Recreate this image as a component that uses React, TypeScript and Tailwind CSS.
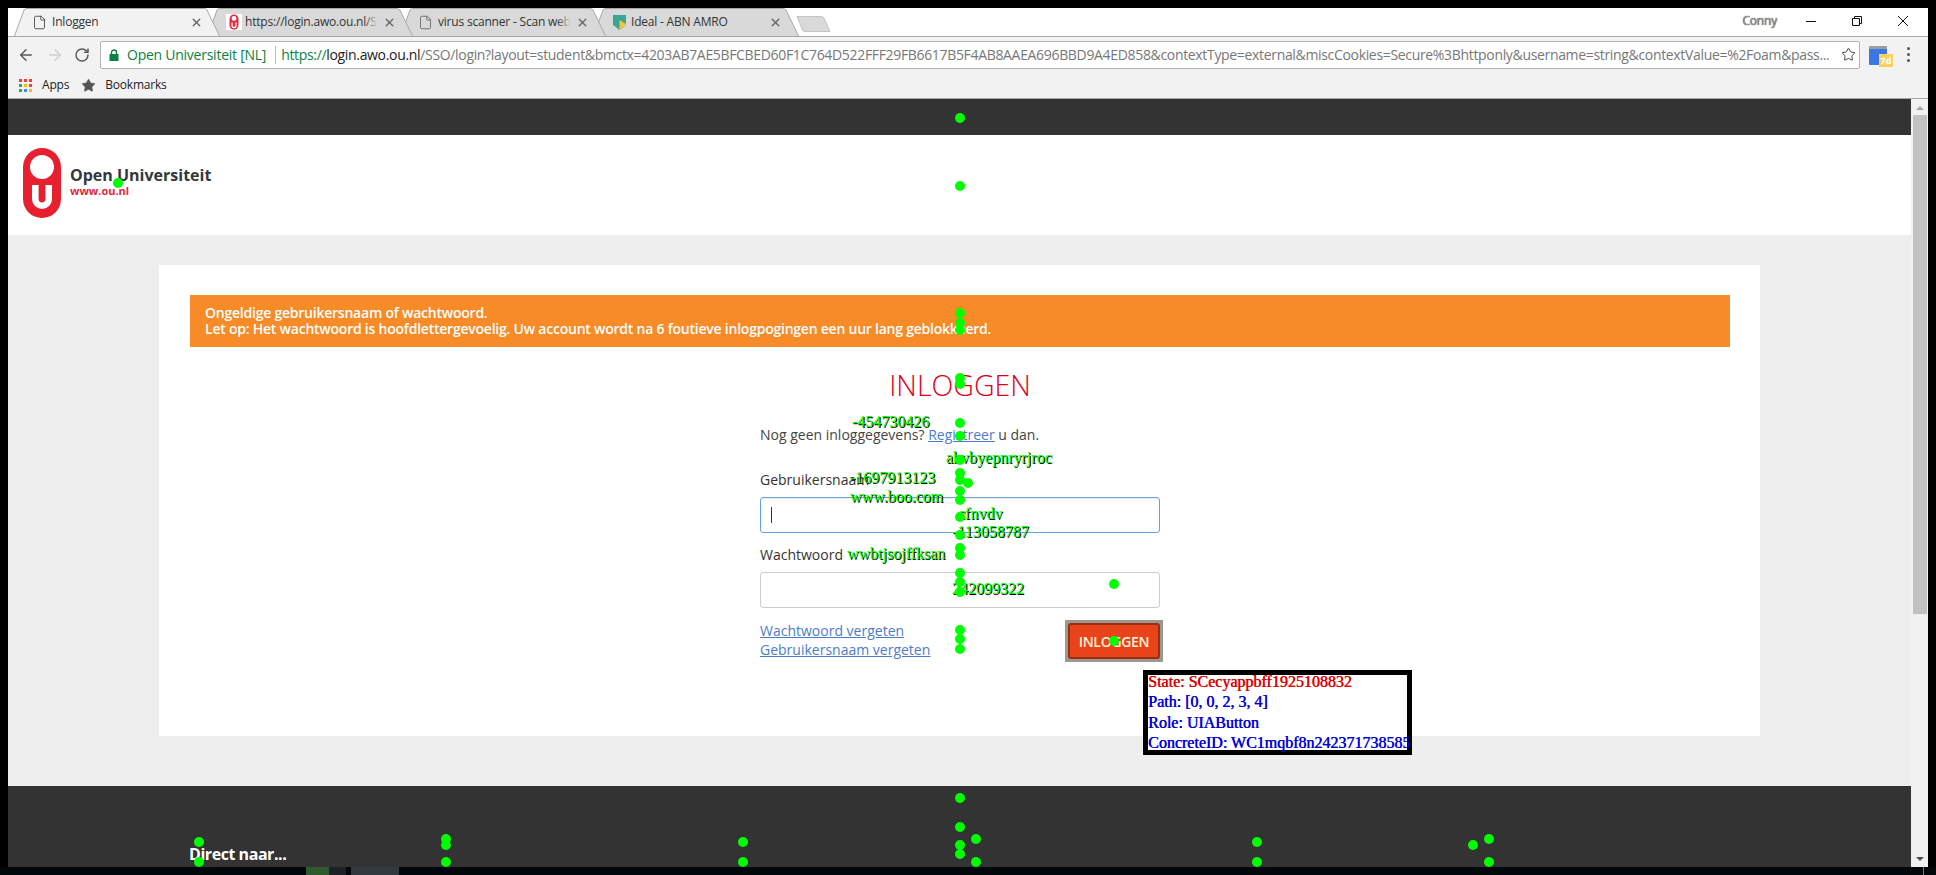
import { ArrowLeft, ArrowRight, File, RotateCw, Star, X } from 'lucide-react';

const URL_TEXT =
  '/SSO/login?layout=student&bmctx=4203AB7AE5BFCBED60F1C764D522FFF29FB6617B5F4AB8AAEA696BBD9A4ED858&contextType=external&miscCookies=Secure%3Bhttponly&username=string&contextValue=%2Foam&pass...';

const debugLabels = [
  { text: '-454730426', x: 852, y: 413 },
  { text: 'ahvbyepnryrjroc', x: 946, y: 449 },
  { text: '-1697913123', x: 850, y: 469 },
  { text: 'www.boo.com', x: 850, y: 488 },
  { text: 'cfnvdv', x: 958, y: 505 },
  { text: '-113058787', x: 952, y: 523 },
  { text: 'wwbtjsojffksan', x: 847, y: 545 },
  { text: '242099322', x: 952, y: 580 },
];

const dots = [
  [960, 118], [960, 186], [118, 183], [960, 313], [960, 323], [960, 330], [960, 378], [960, 384],
  [960, 423], [960, 436], [960, 460], [960, 473], [960, 480], [968, 483], [960, 491], [960, 500],
  [960, 517], [960, 535], [960, 548], [960, 555], [960, 573], [960, 582], [960, 592], [1114, 584],
  [960, 630], [960, 639], [960, 649], [1114, 641], [960, 798], [960, 827], [199, 842], [446, 839],
  [446, 845], [743, 842], [960, 845], [976, 839], [960, 854], [199, 862], [446, 862], [743, 862],
  [976, 862], [1257, 842], [1257, 862], [1473, 845], [1489, 839], [1489, 862],
];

const OuFavicon = () => (
  <svg width="16" height="16" viewBox="0 0 16 16" className="shrink-0">
    <rect width="16" height="16" fill="#fff" />
    <rect x="3.5" y="0.5" width="9" height="15" rx="4.5" fill="#e8283c" />
    <circle cx="8" cy="4.5" r="2.4" fill="#fff" />
    <path d="M6 8.5v3a2 2 0 0 0 4 0v-3" fill="none" stroke="#fff" strokeWidth="1.3" />
  </svg>
);

const AbnFavicon = () => (
  <svg width="16" height="17" viewBox="0 0 16 17" className="shrink-0">
    <path d="M1 1h13v10l-6.5 5L1 11z" fill="#3aa597" />
    <path d="M7.5 6l6.5 4v1l-6.5 5z" fill="#f7c538" />
  </svg>
);

const Tab = ({
  active,
  title,
  icon,
  z,
}: {
  active?: boolean;
  title: string;
  icon: React.ReactNode;
  z: string;
}) => (
  <div className={`relative w-[206px] h-full -mr-[13px] shrink-0 ${z}`}>
    <svg width="206" height="28" viewBox="0 0 206 28" className="absolute inset-0">
      <path
        d="M0.5 28 L10 2 Q11 0.5 13 0.5 H190 Q192 0.5 193 2 L205.5 28"
        fill={active ? '#f2f2f2' : '#d9d9d9'}
        stroke="#a8a8a8"
      />
    </svg>
    <div className="relative flex items-center h-full pl-[19px] pr-[17px]">
      <div className="w-[19px] shrink-0">{icon}</div>
      <div className="relative w-[133px] overflow-hidden whitespace-nowrap text-[12px] tracking-[-0.2px] text-[#333] font-['Open_Sans',sans-serif]">
        {title}
        <div className={`absolute right-0 top-0 bottom-0 w-[14px] bg-gradient-to-r from-transparent ${active ? 'to-[#f2f2f2]' : 'to-[#d9d9d9]'}`} />
      </div>
      <X size={13} strokeWidth={2.6} className="ml-auto text-[#666]" />
    </div>
  </div>
);

const Chrome = () => (
  <div className="shrink-0 font-['Open_Sans',sans-serif]">
    <div className="relative flex h-[28px] bg-white pl-[6px]">
      <Tab active title="Inloggen" z="z-40" icon={<File size={15} strokeWidth={1.4} className="text-[#444] -ml-[1px]" />} />
      <Tab title="https://login.awo.ou.nl/SSO/login" z="z-30" icon={<OuFavicon />} />
      <Tab title="virus scanner - Scan website" z="z-20" icon={<File size={15} strokeWidth={1.4} className="text-[#666] -ml-[1px]" />} />
      <Tab title="Ideal - ABN AMRO" z="z-10" icon={<AbnFavicon />} />
      <svg width="36" height="18" viewBox="0 0 36 18" className="ml-[10px] mt-[7px] shrink-0">
        <path d="M1 1.5 H25 Q27 1.5 28 3 L34 16.5 H9 Q7 16.5 6.5 15 Z" fill="#d9d9d9" stroke="#c4c4c4" />
      </svg>
      <div className="ml-auto flex items-center h-[26px]">
        <span className="text-[12px] tracking-[-0.2px] text-[#999] mr-[28px] [text-shadow:0_0_1px_#000]">Conny</span>
        <svg width="12" height="12" viewBox="0 0 12 12" className="mr-[34px]">
          <path d="M1 6.5h10" stroke="#111" strokeWidth="1" />
        </svg>
        <svg width="12" height="12" viewBox="0 0 12 12" className="mr-[34px]">
          <path d="M1.5 3.5h7v7h-7zM3.5 3.5v-2h7v7h-2" fill="none" stroke="#111" strokeWidth="1" />
        </svg>
        <svg width="12" height="12" viewBox="0 0 12 12" className="mr-[19px]">
          <path d="M1 1l10 10M11 1L1 11" stroke="#111" strokeWidth="1" />
        </svg>
      </div>
    </div>

    <div className="flex items-center h-[36px] bg-[#f2f2f2] border-t border-[#a8a8a8]">
      <ArrowLeft size={18} strokeWidth={2} className="ml-[9px] text-[#5a5a5a]" />
      <ArrowRight size={18} strokeWidth={2} className="ml-[11px] text-[#cfcfcf]" />
      <RotateCw size={16} strokeWidth={2.2} className="ml-[10px] text-[#5a5a5a]" />
      <div className="flex items-center w-[1760px] h-[28px] ml-[10px] bg-white border border-[#b3b3b3] rounded-[2px] text-[14px] whitespace-nowrap overflow-hidden">
        <svg width="10" height="12" viewBox="0 0 10 12" className="ml-[8px] shrink-0">
          <path d="M2.5 5V3.5a2.5 2.5 0 0 1 5 0V5" fill="none" stroke="#0b8043" strokeWidth="1.4" />
          <rect x="0.5" y="5" width="9" height="7" fill="#0b8043" />
        </svg>
        <span className="ml-[8px] text-[#0b8043] tracking-[-0.25px]">Open Universiteit [NL]</span>
        <div className="w-px h-[18px] bg-[#bdbdbd] ml-[9px]" />
        <div className="w-[1551px] ml-[5px] overflow-hidden tracking-[-0.33px]">
          <span className="text-[#0b8043]">https://</span>
          <span className="text-[#222]">login.awo.ou.nl</span>
          <span className="text-[#777]">{URL_TEXT}</span>
        </div>
        <Star size={15} strokeWidth={1.6} className="ml-[9px] shrink-0 text-[#444]" />
      </div>
      <div className="relative w-[18px] h-[19px] ml-[9px] mt-[2px] bg-[#3b78e7] rounded-[1px]">
        <div className="absolute left-0 right-0 top-0 h-[3px] bg-[#9e9e9e]" />
        <div className="absolute -right-[6px] -bottom-[2px] w-[14px] h-[13px] bg-[#fbd25c] text-[9px] leading-[13px] text-center text-white font-bold">7d</div>
      </div>
      <div className="ml-[20px] flex flex-col gap-[3px]">
        <div className="w-[3px] h-[3px] rounded-full bg-[#555]" />
        <div className="w-[3px] h-[3px] rounded-full bg-[#555]" />
        <div className="w-[3px] h-[3px] rounded-full bg-[#555]" />
      </div>
    </div>

    <div className="flex items-center h-[27px] bg-[#f2f2f2] border-b border-[#a8a8a8] text-[12px] text-[#222]">
      <svg width="13" height="13" viewBox="0 0 13 13" className="ml-[11px]">
        <rect x="0" y="0" width="3" height="3" fill="#ea4335" />
        <rect x="5" y="0" width="3" height="3" fill="#ea4335" />
        <rect x="10" y="0" width="3" height="3" fill="#ea4335" />
        <rect x="0" y="5" width="3" height="3" fill="#34a853" />
        <rect x="5" y="5" width="3" height="3" fill="#fbbc05" />
        <rect x="10" y="5" width="3" height="3" fill="#ea4335" />
        <rect x="0" y="10" width="3" height="3" fill="#34a853" />
        <rect x="5" y="10" width="3" height="3" fill="#4285f4" />
        <rect x="10" y="10" width="3" height="3" fill="#fbbc05" />
      </svg>
      <span className="ml-[10px] tracking-[-0.2px]">Apps</span>
      <Star size={15} fill="#555" strokeWidth={1} className="ml-[12px] text-[#555]" />
      <span className="ml-[9px] tracking-[-0.2px]">Bookmarks</span>
    </div>
  </div>
);

const Logo = () => (
  <div className="-mt-[4px] flex items-center font-['Open_Sans',sans-serif]">
    <svg width="38" height="70" viewBox="0 0 38 70" className="shrink-0">
      <rect width="38" height="70" rx="19" fill="#e6202f" />
      <circle cx="19" cy="19" r="12" fill="#fff" />
      <path d="M19 37h-10v14a10 10 0 0 0 20 0v-14h-6.6v14a3.4 3.4 0 0 1-6.8 0v-14z" fill="#fff" />
    </svg>
    <div className="ml-[9px] -mt-[3px]">
      <div className="text-[16px] leading-[18px] font-bold text-[#33383c]">Open Universiteit</div>
      <div className="text-[11px] leading-[13px] font-bold text-[#e6263a]">www.ou.nl</div>
    </div>
  </div>
);

const LoginForm = () => (
  <div className="w-[400px] mx-auto text-[14px] text-[#444]">
    <h1 className="mt-[21px] text-center text-[28.5px] leading-[34px] font-light text-[#e0001a]">INLOGGEN</h1>
    <p className="mt-[23px] leading-[20px]">
      Nog geen inloggegevens? <a className="text-[#4d7cc7] underline">Registreer</a> u dan.
    </p>
    <label className="block mt-[25px] leading-[20px] text-[#333]">Gebruikersnaam</label>
    <div className="mt-[7px] flex items-center h-[36px] px-[10px] border border-[#6a9fd8] rounded-[3px] shadow-[inset_0_1px_1px_rgba(0,0,0,0.08)]">
      <div className="w-px h-[16px] bg-[#333]" />
    </div>
    <label className="block mt-[12px] leading-[20px] text-[#333]">Wachtwoord</label>
    <div className="mt-[7px] h-[36px] border border-[#ccc] rounded-[3px]" />
    <div className="mt-[12px] flex justify-between">
      <div className="pt-[1px] leading-[19px] text-[#4d7cc7] underline">
        <a className="block">Wachtwoord vergeten</a>
        <a className="block">Gebruikersnaam vergeten</a>
      </div>
      <div className="-mr-[3px] p-[3px] bg-[#999990]">
        <button className="w-[92px] h-[36px] bg-[#e8431a] border-2 border-[#98300f] rounded-[3px] text-[14px] tracking-[-0.3px] font-semibold text-[#fff3d6]">
          INLOGGEN
        </button>
      </div>
    </div>
  </div>
);

const Page = () => (
  <div className="flex-1 min-w-0 flex flex-col bg-[#eee] font-['Open_Sans',sans-serif]">
    <div className="h-[36px] bg-[#333]" />
    <div className="flex items-center h-[100px] pl-[15px] bg-white">
      <Logo />
    </div>
    <main className="px-[151px] pt-[30px] pb-[50px]">
      <div className="h-[471px] bg-white pl-[31px] pr-[30px] pt-[30px]">
        <div className="h-[52px] bg-[#f68b28] px-[15px] py-[10px] text-[14px] leading-[16px] tracking-[-0.23px] font-semibold text-white">
          <p>Ongeldige gebruikersnaam of wachtwoord.</p>
          <p>Let op: Het wachtwoord is hoofdlettergevoelig. Uw account wordt na 6 foutieve inlogpogingen een uur lang geblokkeerd.</p>
        </div>
        <LoginForm />
      </div>
    </main>
    <footer className="flex-1 bg-[#333] pl-[181px] pt-[57px]">
      <h2 className="text-[16px] leading-[22px] tracking-[-0.45px] font-bold text-white">Direct naar...</h2>
    </footer>
  </div>
);

const Scrollbar = () => (
  <div className="w-[17px] shrink-0 flex flex-col items-center bg-[#f1f1f1]">
    <div className="mt-[7px] w-0 h-0 border-x-[4px] border-x-transparent border-b-[4px] border-b-[#a3a3a3]" />
    <div className="mt-[5px] w-[14px] h-[499px] bg-[#c1c1c1]" />
    <div className="mt-auto mb-[6px] w-0 h-0 border-x-[4px] border-x-transparent border-t-[4px] border-t-[#505050]" />
  </div>
);

const App = () => (
  <div className="relative w-[1936px] h-[875px] overflow-hidden flex flex-col bg-black pt-[8px]">
    <div className="flex-1 min-h-0 mx-[8px] flex flex-col">
      <Chrome />
      <div className="flex-1 min-h-0 flex">
        <Page />
        <Scrollbar />
      </div>
    </div>

    <div className="relative h-[8px] shrink-0 bg-[#02070b] overflow-hidden">
      <div className="absolute left-[306px] top-0 bottom-0 w-[23px] bg-[#2f5a2f]" />
      <div className="absolute left-[329px] top-0 bottom-0 w-[17px] bg-[#1c2226]" />
      <div className="absolute left-[351px] top-0 bottom-0 w-[48px] bg-[#303840]" />
      <span className="absolute left-[1826px] top-[5px] text-[11px] leading-[14px] text-white font-['Open_Sans',sans-serif]">23:51</span>
      <div className="absolute left-[1923px] top-0 bottom-0 w-px bg-[#777]" />
    </div>

    {debugLabels.map((l) => (
      <span
        key={l.text}
        className="absolute text-[16px] leading-[18px] whitespace-nowrap text-[#00ff00] [text-shadow:1px_1px_0_#000] font-['Liberation_Serif',serif]"
        style={{ left: l.x, top: l.y }}
      >
        {l.text}
      </span>
    ))}

    <div className="absolute left-[1143px] top-[670px] w-[269px] h-[85px] border-[5px] border-black bg-white text-[16px] leading-[20.4px] font-['Liberation_Serif',serif] whitespace-nowrap [text-shadow:0.5px_0_0_currentColor]">
      <div className="-mt-[3px] text-[#e00000]">State: SCecyappbff1925108832</div>
      <div className="text-[#0000e0]">Path: [0, 0, 2, 3, 4]</div>
      <div className="text-[#0000e0]">Role: UIAButton</div>
      <div className="text-[#0000e0]">ConcreteID: WC1mqbf8n242371738585</div>
    </div>

    {dots.map(([x, y], i) => (
      <div
        key={i}
        className="absolute w-[10px] h-[10px] rounded-full bg-[#00ff00]"
        style={{ left: x - 5, top: y - 5 }}
      />
    ))}
  </div>
);

export default App;
